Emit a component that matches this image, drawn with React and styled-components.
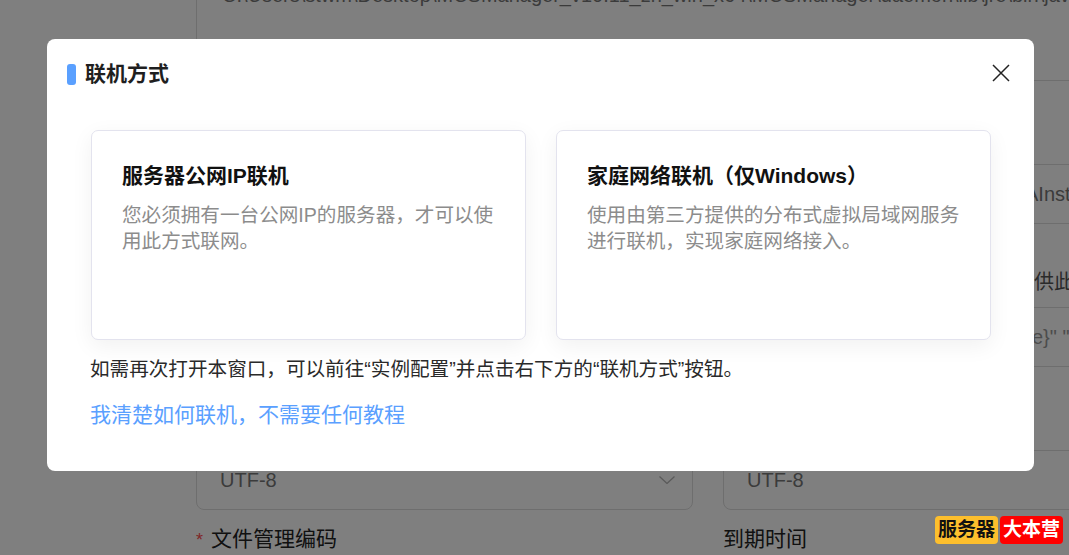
import styled, { createGlobalStyle } from 'styled-components';

const GlobalStyle = createGlobalStyle`
    html, body {
        margin: 0;
        padding: 0;
        background: #ffffff;
        font-family: "Liberation Sans", "Noto Sans CJK SC", sans-serif;
    }
`;

const OPTIONS = [
    {
        title: '服务器公网IP联机',
        text: '您必须拥有一台公网IP的服务器，才可以使用此方式联网。',
    },
    {
        title: '家庭网络联机（仅Windows）',
        text: '使用由第三方提供的分布式虚拟局域网服务进行联机，实现家庭网络接入。',
    },
];

export default function App () {
    return (
        <>
            <GlobalStyle />
            <Page>
                <Form>
                    <PathBox>
                        C:\Users\stwm\Desktop\MCSManager_v10.11_zh_win_x64\MCSManager\daemon\lib\jre\bin\java.exe
                    </PathBox>
                    <Box $top={83} $indent={828}>AInstance</Box>
                    <Hint>供此</Hint>
                    <Box $indent={835} $muted>e}" "</Box>
                    <Columns $top={84}>
                        <SelectBox>
                            UTF-8
                            <Chevron width="16" height="8" viewBox="0 0 16 8">
                                <path d="M0.5 0.5 L8 7.5 L15.5 0.5" fill="none" stroke="#b5b5b5" strokeWidth="1.3" />
                            </Chevron>
                        </SelectBox>
                        <SelectBox>UTF-8</SelectBox>
                    </Columns>
                    <Columns $top={15}>
                        <Label><Star>*</Star>文件管理编码</Label>
                        <Label>到期时间</Label>
                    </Columns>
                </Form>

                <Overlay>
                    <Modal>
                        <Header>
                            <Heading>
                                <Mark />
                                <HeadingText>联机方式</HeadingText>
                            </Heading>
                            <CloseIcon width="18" height="18" viewBox="0 0 18 18">
                                <path d="M1 1 L17 17 M17 1 L1 17" stroke="#222222" strokeWidth="1.5" fill="none" />
                            </CloseIcon>
                        </Header>
                        <Body>
                            <Cards>
                                {OPTIONS.map(option => (
                                    <Card key={option.title}>
                                        <CardTitle>{option.title}</CardTitle>
                                        <CardText>{option.text}</CardText>
                                    </Card>
                                ))}
                            </Cards>
                            <Note>如需再次打开本窗口，可以前往“实例配置”并点击右下方的“联机方式”按钮。</Note>
                            <SkipLink>我清楚如何联机，不需要任何教程</SkipLink>
                        </Body>
                    </Modal>
                </Overlay>

                <Watermark>
                    <Badge $bg="#fdbf2d" $color="#111111">服务器</Badge>
                    <Badge $bg="#ff0000" $color="#ffffff">大本营</Badge>
                </Watermark>
            </Page>
        </>
    );
}

const Page = styled.div`
    position: relative;
    width: 1069px;
    height: 555px;
    overflow: hidden;
`;

const Form = styled.div`
    width: 1024px;
    margin-top: -60px;
    padding-left: 196px;
    color: #222222;
`;

const Box = styled.div`
    box-sizing: border-box;
    width: 100%;
    height: 60px;
    margin-top: ${props => props.$top || 0}px;
    padding-left: ${props => props.$indent || 23}px;
    border: 1px solid #dcdcdc;
    border-radius: 8px;
    font-size: 20px;
    line-height: 58px;
    white-space: nowrap;
    color: ${props => props.$muted ? '#999999' : '#777777'};
`;

const PathBox = styled(Box)`
    height: 141px;
    padding-top: 39px;
    padding-left: 25px;
    line-height: 30px;
    overflow: hidden;
`;

const Hint = styled.div`
    height: 83px;
    padding-left: 838px;
    box-sizing: border-box;
    font-size: 20px;
    line-height: 116px;
    white-space: nowrap;
    color: #555555;
`;

const Columns = styled.div`
    display: grid;
    grid-template-columns: 497px 497px;
    gap: 30px;
    margin-top: ${props => props.$top}px;
`;

const SelectBox = styled(Box)`
    display: flex;
    align-items: center;
    justify-content: space-between;
    height: 60px;
    margin-top: -1px;
    padding-right: 17px;
`;

const Chevron = styled.svg`
    display: block;
`;

const Label = styled.div`
    font-size: 21px;
    line-height: 28px;
    white-space: nowrap;
`;

const Star = styled.span`
    display: inline-block;
    width: 15px;
    font-size: 18px;
    color: #ff4d4f;
`;

const Overlay = styled.div`
    position: absolute;
    inset: 0;
    padding: 39px 0 0 47px;
    background: rgba(0, 0, 0, 0.5);
`;

const Modal = styled.div`
    box-sizing: border-box;
    width: 987px;
    height: 432px;
    padding: 25px 24px 0 20px;
    background: #ffffff;
    border-radius: 8px;
`;

const Header = styled.div`
    display: flex;
    align-items: center;
    justify-content: space-between;
    height: 21px;
`;

const Heading = styled.div`
    display: flex;
    align-items: center;
    gap: 9px;
    font-size: 21px;
    font-weight: 700;
    line-height: 21px;
    color: #1f1f1f;
`;

const HeadingText = styled.span`
    margin-top: -2px;
`;

const CloseIcon = styled.svg`
    display: block;
    margin-top: -4px;
`;

const Mark = styled.span`
    width: 9px;
    height: 21px;
    border-radius: 3px;
    background: #5aa0ff;
`;

const Body = styled.div`
    padding: 45px 19px 0 24px;
`;

const Cards = styled.div`
    display: grid;
    grid-template-columns: 435px 435px;
    gap: 30px;
`;

const Card = styled.div`
    box-sizing: border-box;
    height: 210px;
    padding: 30px 30px 0;
    border: 1px solid #e3e3ee;
    border-radius: 7px;
    background: #ffffff;
    box-shadow: 0 6px 22px rgba(0, 0, 0, 0.06);
`;

const CardTitle = styled.div`
    font-size: 21px;
    font-weight: 700;
    line-height: 30px;
    color: #111111;
`;

const CardText = styled.div`
    margin-top: 11px;
    font-size: 19.6px;
    line-height: 26px;
    color: #8c8c8c;
`;

const Note = styled.div`
    margin-top: 15px;
    margin-left: -1px;
    font-size: 19.6px;
    line-height: 28px;
    white-space: nowrap;
    color: #2a2a2a;
`;

const SkipLink = styled.div`
    margin-top: 17px;
    margin-left: -1px;
    font-size: 21px;
    line-height: 30px;
    color: #5aa0ff;
`;

const Watermark = styled.div`
    position: absolute;
    top: 516px;
    left: 935px;
    display: flex;
    gap: 2px;
`;

const Badge = styled.span`
    width: 63px;
    height: 28px;
    border-radius: 4px;
    background: ${props => props.$bg};
    color: ${props => props.$color};
    font-size: 19px;
    font-weight: 700;
    line-height: 27px;
    text-align: center;
    white-space: nowrap;
`;
